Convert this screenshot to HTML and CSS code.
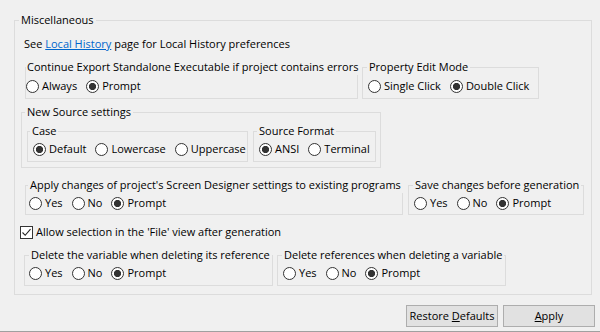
FILE: index.html
```html
<!DOCTYPE html>
<html>
<head>
<meta charset="utf-8">
<link rel="stylesheet" href="styles.css">
</head>
<body>
<div class="page">
  <fieldset class="group outer">
    <legend>Miscellaneous</legend>
    <p class="note">See <a href="#">Local History</a> page for Local History preferences</p>

    <div class="row row-1">
      <fieldset class="group g-export">
        <legend class="tight">Continue Export Standalone Executable if project contains errors</legend>
        <div class="opts">
          <label class="opt"><input type="radio" name="exp">Always</label>
          <label class="opt"><input type="radio" name="exp" checked>Prompt</label>
        </div>
      </fieldset>
      <fieldset class="group g-edit">
        <legend>Property Edit Mode</legend>
        <div class="opts">
          <label class="opt"><input type="radio" name="edit">Single Click</label>
          <label class="opt"><input type="radio" name="edit" checked>Double Click</label>
        </div>
      </fieldset>
    </div>

    <div class="row row-2">
      <fieldset class="group g-source">
        <legend class="lg-6">New Source settings</legend>
        <div class="row row-inner">
          <fieldset class="group g-case">
            <legend class="lg-5">Case</legend>
            <div class="opts">
              <label class="opt"><input type="radio" name="case" checked>Default</label>
              <label class="opt"><input type="radio" name="case">Lowercase</label>
              <label class="opt"><input type="radio" name="case">Uppercase</label>
            </div>
          </fieldset>
          <fieldset class="group g-format">
            <legend class="lg-6">Source Format</legend>
            <div class="opts">
              <label class="opt"><input type="radio" name="fmt" checked>ANSI</label>
              <label class="opt"><input type="radio" name="fmt">Terminal</label>
            </div>
          </fieldset>
        </div>
      </fieldset>
    </div>

    <div class="row row-3">
      <fieldset class="group g-apply">
        <legend class="lg-5">Apply changes of project's Screen Designer settings to existing programs</legend>
        <div class="opts">
          <label class="opt"><input type="radio" name="apply">Yes</label>
          <label class="opt"><input type="radio" name="apply">No</label>
          <label class="opt"><input type="radio" name="apply" checked>Prompt</label>
        </div>
      </fieldset>
      <fieldset class="group g-save">
        <legend>Save changes before generation</legend>
        <div class="opts">
          <label class="opt"><input type="radio" name="save">Yes</label>
          <label class="opt"><input type="radio" name="save">No</label>
          <label class="opt"><input type="radio" name="save" checked>Prompt</label>
        </div>
      </fieldset>
    </div>

    <label class="check-row">
      <span class="check"><svg width="11" height="11" viewBox="0 0 11 11"><path d="M1.5 5.5 L4.2 8.3 L9.5 2.2" fill="none" stroke="#222" stroke-width="1.1"/></svg></span>
      Allow selection in the 'File' view after generation
    </label>

    <div class="row row-4">
      <fieldset class="group g-delvar">
        <legend>Delete the variable when deleting its reference</legend>
        <div class="opts">
          <label class="opt"><input type="radio" name="delvar">Yes</label>
          <label class="opt"><input type="radio" name="delvar">No</label>
          <label class="opt"><input type="radio" name="delvar" checked>Prompt</label>
        </div>
      </fieldset>
      <fieldset class="group g-delref">
        <legend>Delete references when deleting a variable</legend>
        <div class="opts">
          <label class="opt"><input type="radio" name="delref">Yes</label>
          <label class="opt"><input type="radio" name="delref">No</label>
          <label class="opt"><input type="radio" name="delref" checked>Prompt</label>
        </div>
      </fieldset>
    </div>
  </fieldset>
</div>

<div class="actions">
  <button class="btn">Restore <u>D</u>efaults</button>
  <button class="btn"><u>A</u>pply</button>
</div>
</body>
</html>
```

FILE: styles.css
```css
* { box-sizing: border-box; }

html, body { margin: 0; padding: 0; }

body {
  width: 600px;
  height: 332px;
  overflow: hidden;
  background: #f0f0f0;
  color: #000;
  font-family: "Open Sans", "Noto Sans", sans-serif;
  font-size: 11px;
  line-height: 16px;
  border-bottom: 1px solid #a0a0a0;
}

.page { padding: 12px 0 0 14px; }

.group {
  margin: 0;
  padding: 0;
  min-width: 0;
  border: 1px solid #dcdcdc;
}

legend {
  margin-left: 4px;
  padding: 0 2px;
  line-height: 16px;
  white-space: nowrap;
}

legend.tight { margin-left: 0; padding: 0 1px; }
legend.lg-6 { margin-left: 3px; }
legend.lg-5 { margin-left: 2px; }

.outer { width: 578px; padding: 0 0 8px 0; }

.note { margin: 8px 0 0 9px; white-space: nowrap; }

.note a { color: #0066cc; text-decoration: underline; }

.row { display: flex; }

.row-1 { margin: 7px 0 0 10px; gap: 4px; }
.row-2 { margin: 5px 0 0 6px; }
.row-3 { margin: 9px 0 0 10px; gap: 5px; }
.row-4 { margin: 7px 0 0 9px; gap: 4px; }
.row-inner { margin: 3px 0 0 5px; gap: 5px; }

.g-export { width: 333px; padding: 3px 0 4px 0; }
.g-edit { width: 177px; padding: 3px 0 4px 0; }
.g-source { width: 360px; padding: 0 0 5px 0; }
.g-case { width: 221px; padding: 2px 0 4px 0; }
.g-format { width: 123px; padding: 2px 0 4px 0; }
.g-apply { width: 378px; padding: 2px 0 3px 0; }
.g-save { width: 176px; padding: 2px 0 3px 0; }
.g-delvar { width: 249px; padding: 2px 0 4px 0; }
.g-delref { width: 229px; padding: 2px 0 4px 0; }

.opts { display: flex; gap: 9px; white-space: nowrap; padding-left: 5px; }

.g-export .opts { padding-left: 0; }
.g-apply .opts { padding-left: 3px; }
.g-save .opts, .g-delref .opts { padding-left: 5px; }
.g-delvar .opts { padding-left: 4px; }

.opt { display: flex; align-items: center; gap: 3px; }

.opt input {
  appearance: none;
  -webkit-appearance: none;
  margin: 0;
  width: 13px;
  height: 13px;
  border: 1px solid #333;
  border-radius: 50%;
  background: #fff;
  flex: none;
}

.opt input:checked {
  background: radial-gradient(circle, #333 0 3.3px, #fff 3.9px);
}

.check-row {
  display: flex;
  align-items: center;
  gap: 3px;
  margin: 9px 0 0 5px;
  white-space: nowrap;
}

.check {
  display: flex;
  align-items: center;
  justify-content: center;
  width: 13px;
  height: 13px;
  border: 1px solid #333;
  background: #fff;
}

.actions {
  display: flex;
  justify-content: flex-end;
  gap: 5px;
  margin-top: 10px;
  padding-right: 5px;
}

.btn {
  width: 92px;
  height: 22px;
  padding: 0;
  border: 1px solid #adadad;
  background: #e1e1e1;
  color: #000;
  font: inherit;
  line-height: 18px;
  white-space: nowrap;
}
```
